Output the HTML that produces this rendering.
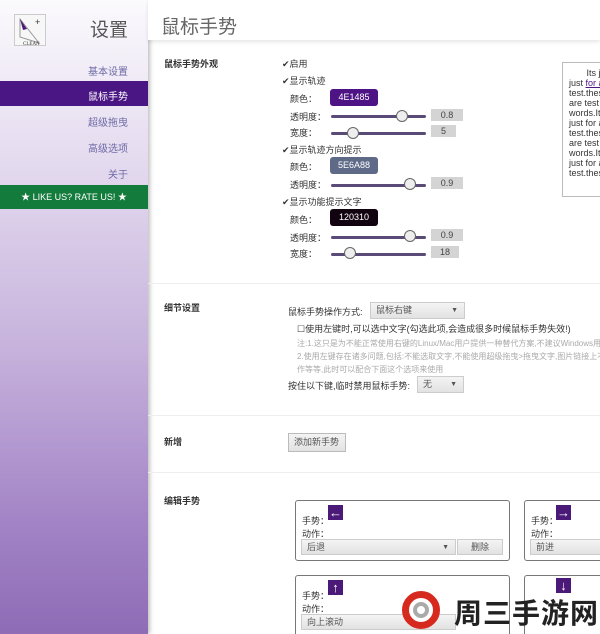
<!DOCTYPE html>
<html><head><meta charset="utf-8"><style>
*{margin:0;padding:0;box-sizing:border-box}
html,body{width:600px;height:634px;overflow:hidden}
body{position:relative;background:#fff;font-family:"Liberation Sans","Noto Sans CJK SC",sans-serif;font-size:9px;color:#333}
#wrap{position:absolute;left:0;top:0;width:600px;height:634px;overflow:hidden}
.a{position:absolute;white-space:nowrap}
#side{position:absolute;left:0;top:0;width:148px;height:634px;background:linear-gradient(#fbfafd 0px,#e6ddf0 150px,#c6b2dc 350px,#a384c6 520px,#8e6cb6 634px);box-shadow:2px 0 4px rgba(0,0,0,.25)}
.nav{position:absolute;right:20px;font-size:10px;color:#6d6aa6}
.sl{position:absolute;height:3px;background:#5a4a78;border-radius:2px}
.kn{position:absolute;width:12px;height:12px;border-radius:50%;background:#eee;border:1px solid #666}
.val{position:absolute;background:#d4d4d4;height:12px;font-size:9px;text-align:center;line-height:12px;color:#444}
.col{position:absolute;left:330px;width:48px;height:17px;border-radius:3px;color:#fff;font-size:9px;text-align:center;line-height:17px}
.cb{font-size:9px}
.box{position:absolute;border:1px solid #777;border-radius:3px;background:#fff}
.arr{position:absolute;width:15px;height:15px;background:#4b1a78;color:#fff;font-size:13px;line-height:15px;text-align:center;font-weight:bold}
.sel{position:absolute;background:linear-gradient(#f4f4f4,#e2e2e2);border:1px solid #ccc;font-size:9px;line-height:15px;padding-left:5px;color:#555}
.hr{position:absolute;left:148px;width:452px;height:1px;background:#eee}
</style></head><body><div id="wrap">
<div id="side">
<div class="a" style="left:14px;top:14px;width:32px;height:32px;border:1px solid #ccc;background:#f7f7f7"><svg width="32" height="32"><path d="M5 4 L5 22 L24 28 Z" fill="none" stroke="#999"/><path d="M5 4 L12 14 L8 15Z" fill="#4b1a78"/><text x="8" y="30" font-size="5" fill="#333" font-family="Liberation Serif">CLEAN</text><text x="20" y="10" font-size="9" fill="#333">+</text></svg></div>
<div class="a" style="right:20px;top:15px;font-size:19px;color:#555">设置</div>
<div class="nav" style="top:63px">基本设置</div>
<div class="a" style="left:0;top:81px;width:148px;height:25px;background:#4a1683"></div>
<div class="nav" style="top:88px;color:#fff">鼠标手势</div>
<div class="nav" style="top:114px">超级拖曳</div>
<div class="nav" style="top:140px">高级选项</div>
<div class="nav" style="top:166px">关于</div>
<div class="a" style="left:0;top:185px;width:148px;height:24px;background:#137b3c;color:#fff;font-size:9px;line-height:24px;text-align:center">★ LIKE US? RATE US! ★</div>
</div>
<div class="a" style="left:148px;top:0;width:452px;height:40px;background:#fff;box-shadow:0 2px 4px rgba(0,0,0,.1)"></div>
<div class="a" style="left:161px;top:12px;font-size:19px;color:#666">鼠标手势</div>

<div class="a" style="left:164px;top:57px;font-weight:bold">鼠标手势外观</div>
<div class="a cb" style="left:282px;top:57px">✔启用</div>
<div class="a cb" style="left:282px;top:74px">✔显示轨迹</div>
<div class="a" style="left:290px;top:92px">颜色：</div><div class="col" style="top:89px;background:#4e1485">4E1485</div>
<div class="a" style="left:290px;top:110px">透明度：</div><div class="sl" style="left:331px;top:115px;width:95px"></div><div class="kn" style="left:396px;top:110px"></div><div class="val" style="left:431px;top:109px;width:32px">0.8</div>
<div class="a" style="left:290px;top:126px">宽度：</div><div class="sl" style="left:331px;top:132px;width:95px"></div><div class="kn" style="left:347px;top:127px"></div><div class="val" style="left:431px;top:125px;width:25px">5</div>
<div class="a cb" style="left:282px;top:143px">✔显示轨迹方向提示</div>
<div class="a" style="left:290px;top:160px">颜色：</div><div class="col" style="top:157px;background:#5e6a88">5E6A88</div>
<div class="a" style="left:290px;top:178px">透明度：</div><div class="sl" style="left:331px;top:184px;width:95px"></div><div class="kn" style="left:404px;top:178px"></div><div class="val" style="left:431px;top:177px;width:32px">0.9</div>
<div class="a cb" style="left:282px;top:195px">✔显示功能提示文字</div>
<div class="a" style="left:290px;top:213px">颜色：</div><div class="col" style="top:209px;background:#120310">120310</div>
<div class="a" style="left:290px;top:231px">透明度：</div><div class="sl" style="left:331px;top:236px;width:95px"></div><div class="kn" style="left:404px;top:230px"></div><div class="val" style="left:431px;top:229px;width:32px">0.9</div>
<div class="a" style="left:290px;top:247px">宽度：</div><div class="sl" style="left:331px;top:253px;width:95px"></div><div class="kn" style="left:344px;top:247px"></div><div class="val" style="left:431px;top:246px;width:28px">18</div>
<div class="box" style="left:562px;top:62px;width:50px;height:135px;border-color:#bbb;border-radius:0;font-size:9px;line-height:10px;padding:5px 0 0 6px;overflow:hidden;color:#333">&nbsp;&nbsp;&nbsp;&nbsp;&nbsp;&nbsp;&nbsp;Its j<br>just <u style="color:#4e1485">for a</u><br>test.thes<br>are test<br>words.It<br>just for a<br>test.thes<br>are test<br>words.It<br>just for a<br>test.thes</div>

<div class="hr" style="top:283px"></div>
<div class="a" style="left:164px;top:301px;font-weight:bold">细节设置</div>
<div class="a" style="left:288px;top:305px">鼠标手势操作方式:</div>
<div class="sel" style="left:370px;top:302px;width:95px;height:17px">鼠标右键<span style="position:absolute;right:6px;font-size:7px">▼</span></div>
<div class="a" style="left:297px;top:322px">☐使用左键时,可以选中文字(勾选此项,会造成很多时候鼠标手势失效!)</div>
<div class="a" style="left:297px;top:338px;color:#aaa;font-size:8px">注:1.这只是为不能正常使用右键的Linux/Mac用户提供一种替代方案,不建议Windows用</div>
<div class="a" style="left:297px;top:351px;color:#aaa;font-size:8px">2.使用左键存在诸多问题,包括:不能选取文字,不能使用超级拖曳&gt;拖曳文字,图片链接上不</div>
<div class="a" style="left:297px;top:364px;color:#aaa;font-size:8px">作等等,此时可以配合下面这个选项来使用</div>
<div class="a" style="left:288px;top:379px">按住以下键,临时禁用鼠标手势:</div>
<div class="sel" style="left:417px;top:376px;width:47px;height:17px">无<span style="position:absolute;right:6px;font-size:7px">▼</span></div>

<div class="hr" style="top:415px"></div>
<div class="a" style="left:164px;top:435px;font-weight:bold">新增</div>
<div class="sel" style="left:288px;top:433px;width:58px;height:19px;line-height:17px;border-color:#bbb">添加新手势</div>
<div class="hr" style="top:472px"></div>
<div class="a" style="left:164px;top:494px;font-weight:bold">编辑手势</div>

<div class="box" style="left:295px;top:500px;width:215px;height:61px"></div>
<div class="a" style="left:302px;top:514px">手势：</div><div class="arr" style="left:328px;top:505px">←</div>
<div class="a" style="left:302px;top:527px">动作：</div>
<div class="sel" style="left:301px;top:539px;width:155px;height:16px">后退<span style="position:absolute;right:6px;font-size:7px">▼</span></div>
<div class="sel" style="left:457px;top:539px;width:46px;height:16px;text-align:center;padding:0">删除</div>
<div class="box" style="left:524px;top:500px;width:90px;height:61px"></div>
<div class="a" style="left:531px;top:514px">手势：</div><div class="arr" style="left:556px;top:505px">→</div>
<div class="a" style="left:531px;top:527px">动作：</div>
<div class="sel" style="left:530px;top:539px;width:80px;height:16px">前进</div>

<div class="box" style="left:295px;top:575px;width:215px;height:70px"></div>
<div class="a" style="left:302px;top:589px">手势：</div><div class="arr" style="left:328px;top:580px">↑</div>
<div class="a" style="left:302px;top:602px">动作：</div>
<div class="sel" style="left:301px;top:614px;width:155px;height:16px">向上滚动</div>
<div class="box" style="left:524px;top:575px;width:90px;height:70px"></div>
<div class="arr" style="left:556px;top:578px">↓</div>

<div class="a" style="left:402px;top:591px;width:38px;height:38px;border-radius:50%;border:7px solid #d62a1e;background:#fff"></div>
<div class="a" style="left:413px;top:602px;width:16px;height:16px;border-radius:50%;border:4px solid #aaa"></div>
<div class="a" style="left:454px;top:592px;font-size:28px;font-weight:bold;color:#222;letter-spacing:1px">周三手游网</div>
</div></body></html>
